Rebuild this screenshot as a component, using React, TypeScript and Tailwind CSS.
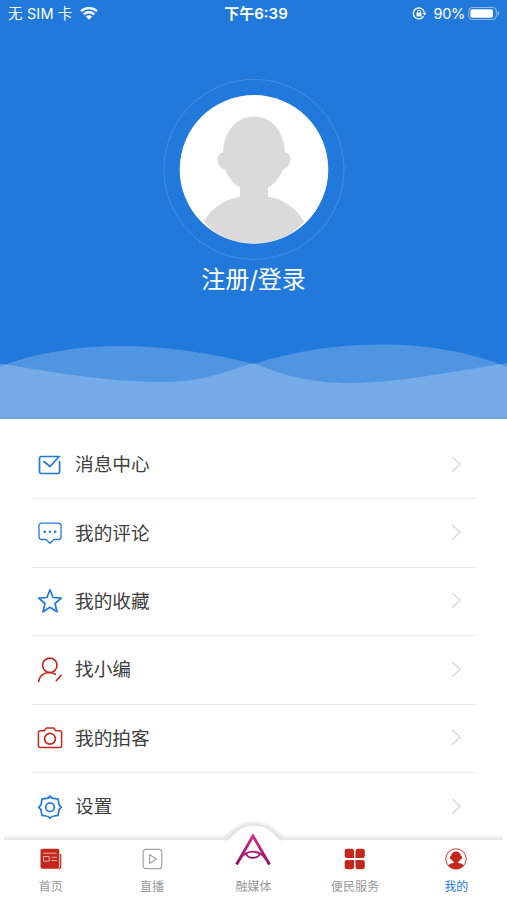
import type { ReactNode } from "react";

const BLUE = "#2179db";
const RED = "#c3281d";

function Icon({ color = BLUE, children }: { color?: string; children: ReactNode }) {
    return (
        <svg width="26" height="28" viewBox="0 0 26 28" fill="none" stroke={color} strokeWidth="1.7" strokeLinecap="round" strokeLinejoin="round">
            {children}
        </svg>
    );
}

const menu: { label: string; icon: ReactNode }[] = [
    {
        label: "消息中心",
        icon: (
            <Icon>
                <path d="M22.600 10.500V20.800a1.700 1.700 0 0 1-1.700 1.700H4.200a1.700 1.700 0 0 1-1.700-1.700V7.200a1.700 1.700 0 0 1 1.700-1.700H22.200L13 15.500 7 10.500" />
            </Icon>
        ),
    },
    {
        label: "我的评论",
        icon: (
            <Icon>
                <path strokeWidth="1.300" d="M4.300 4.200H21.700a2.300 2.300 0 0 1 2.300 2.300V18.200a2.300 2.300 0 0 1-2.300 2.300H17L13 24.200 9 20.500H4.300A2.300 2.300 0 0 1 2 18.200V6.500A2.300 2.300 0 0 1 4.300 4.200Z" />
                <path strokeWidth="2.600" d="M7.800 12.700h.01M13 12.700h.01M18.200 12.700h.01" />
            </Icon>
        ),
    },
    {
        label: "我的收藏",
        icon: (
            <Icon>
                <path strokeWidth="1.700" d="M13 2.700 16.100 10.500 24.300 11.100 18 16.500 20 24.800 13 20.300 6 24.800 8 16.500 1.700 11.100 9.900 10.500Z" />
            </Icon>
        ),
    },
    {
        label: "找小编",
        icon: (
            <Icon color={RED}>
                <circle cx="12.800" cy="9.300" r="7.200" />
                <path d="M1.600 25.300C2.700 20.300 6.500 16.700 12 16.500c2.700 0 4.500.4 6.300 1.700M19.300 24.700 24.200 19.300" />
            </Icon>
        ),
    },
    {
        label: "我的拍客",
        icon: (
            <Icon color={RED}>
                <path strokeWidth="1.500" d="M3.400 6.700H7.300L9.300 4H16.700l2 2.700h3.900a2 2 0 0 1 2 2V21.500a2 2 0 0 1-2 2H3.400a2 2 0 0 1-2-2V8.700a2 2 0 0 1 2-2Z" />
                <circle cx="13" cy="14.800" r="5.400" />
            </Icon>
        ),
    },
    {
        label: "设置",
        icon: (
            <Icon>
                <path d="M13 3C14 5 15.500 5.700 17 5.400L21.100 6.200 21.700 10.300C21.900 12 22.800 13.200 24.300 14.300 22.800 15.400 21.900 16.600 21.700 18.300L21.100 22.400 17 23C15.500 23 14 23.700 13 25.400 12 23.700 10.500 23 9 23L4.900 22.400 4.300 18.300C4.100 16.600 3.200 15.400 1.700 14.300 3.200 13.200 4.100 12 4.300 10.300L4.900 6.200 9 5.400C10.500 5.700 12 5 13 3Z" />
                <circle cx="13" cy="14.200" r="4.300" />
            </Icon>
        ),
    },
];

function StatusBar() {
    return (
        <div className="grid h-7 grid-cols-3 items-center pl-2 pr-[7px] text-[15px] leading-7">
            <div className="flex items-center gap-[7px] whitespace-nowrap">
                <span className="text-[14.500px] tracking-[0.150px]">无 SIM 卡</span>
                <svg width="18" height="14" viewBox="0 0 18 14" fill="none" stroke="white" strokeWidth="2.300">
                    <path d="M1 4.200C5.500 0 12.500 0 17 4.200M3.700 7.400c3-2.900 7.600-2.900 10.600 0" />
                    <path d="M9 12.700 5.900 9.600c1.800-1.700 4.400-1.700 6.200 0Z" fill="white" stroke="none" />
                </svg>
            </div>
            <div className="whitespace-nowrap pl-1 text-center font-semibold">下午6:39</div>
            <div className="flex items-center justify-end">
                <svg width="15" height="14" viewBox="0 0 15 14" fill="none" stroke="white" strokeWidth="1.300">
                    <path d="M11.600 9.200A5.500 5.500 0 1 1 12.300 5.500" />
                    <path d="M10.500 5.800h4l-2 2.700Z" fill="white" stroke="none" />
                    <path d="M4.500 5.700h5v3.700h-5Z" fill="white" stroke="none" />
                    <path d="M5.500 6V4.700a1.500 1.500 0 0 1 3 0v1.300" strokeWidth="1" />
                </svg>
                <span className="ml-[7px] text-[14.500px] tracking-[-0.300px]">90%</span>
                <svg className="ml-[3px]" width="32" height="14" viewBox="0 0 32 14">
                    <rect x=".8" y=".5" width="27.500" height="12" rx="3.500" fill="none" stroke="white" strokeOpacity=".5" />
                    <rect x="2.500" y="2.200" width="22.500" height="8.600" rx="1.700" fill="white" />
                    <path d="M29.700 4.300c2 .5 2 3.900 0 4.400Z" fill="white" fillOpacity=".55" />
                </svg>
            </div>
        </div>
    );
}

function Avatar() {
    return (
        <svg width="182" height="182" viewBox="0 0 182 182">
            <circle cx="91" cy="91.400" r="90" fill="none" stroke="#448fe3" />
            <circle cx="91" cy="91.400" r="74.300" fill="white" />
            <path fill="#dadada" d="M91 38.500c17 0 30 14 31 36 8 1 7 15-2 17-4 9-9 15-15 18v9c16 3 29 12 36 25-11 14.500-29 21.500-50 21.500s-39-7-50-21.500c7-13 20-22 36-25v-9c-6-3-11-9-15-18-9-2-10-16-2-17 1-22 14-36 31-36Z" />
        </svg>
    );
}

const frontWave = "M0 19.500 11 21C70 32 125 38.500 167 38 202 37.500 228 27 254 19 281 31 310 39.500 355 39 398 38.500 449 28 496 21L507 19V75H0Z";

function Waves() {
    return (
        <svg className="block" width="507" height="75" viewBox="0 0 507 75" fill="white">
            <path fillOpacity=".21" d="M0 22.500C75-6 164-3 254 20 330-5 432-8 507 23V75H0Z" />
            <path fillOpacity=".21" d={frontWave} />
            <path d="M0 73.500H507" stroke="#6199d8" strokeOpacity=".5" />
        </svg>
    );
}

const tabs: { label: string; icon: ReactNode; active?: boolean }[] = [
    {
        label: "首页",
        icon: (
            <svg width="22" height="22" viewBox="0 0 22 22" fill="none" stroke="#efb0aa">
                <rect x=".5" y=".8" width="18.800" height="20" rx="1.800" fill={RED} stroke="none" />
                <path d="M20.700 6v12.200c0 1.500-.8 2.500-2 2.500" stroke={RED} strokeWidth="1.200" />
                <path d="M3 5.200h13.500M11.500 9.300H17M11.500 12.500H17M3.500 8.500h5.700v4.700H3.500Z" />
            </svg>
        ),
    },
    {
        label: "直播",
        icon: (
            <svg width="22" height="22" viewBox="0 0 22 22" fill="none" stroke="#a3a3a3" strokeWidth="1.200">
                <rect x="2.100" y="1.300" width="18.700" height="19.300" rx="2.700" />
                <path d="M8.600 6.500 15.300 11 8.600 15.500Z" strokeLinejoin="round" />
            </svg>
        ),
    },
    {
        label: "融媒体",
        icon: (
            <svg className="relative -top-2.5" width="36" height="34" viewBox="0 0 36 34" fill="none" strokeWidth="2.800">
                <defs>
                    <linearGradient id="media" x1="0" y1="0" x2="0" y2="1">
                        <stop offset="0" stopColor="#d22b8c" />
                        <stop offset="1" stopColor="#930d62" />
                    </linearGradient>
                </defs>
                <path d="M1.500 32.500 18 4 34.500 32.500" stroke="url(#media)" />
                <path d="M5 27.500C8 22.500 12.500 19.700 18 19.700s10 2.800 13 7.800" stroke="#b01b74" strokeWidth="1.800" />
                <path d="M11.300 21.300C11.800 27.300 24.200 27.300 24.700 21.300" stroke="#a0146a" strokeWidth="1.800" />
            </svg>
        ),
    },
    {
        label: "便民服务",
        icon: (
            <svg width="22" height="22" viewBox="0 0 22 22" fill={RED}>
                <rect x=".700" y=".700" width="9.300" height="9.300" rx="2.300" />
                <rect x="11.500" y=".700" width="9.300" height="9.300" rx="2.300" />
                <rect x=".700" y="12" width="9.300" height="9.300" rx="2.300" />
                <rect x="11.500" y="12" width="9.300" height="9.300" rx="2.300" />
                <path d="M7 7h3v3H7ZM11.500 7h3v3h-3ZM7 12h3v3H7ZM11.500 12h3v3h-3Z" />
            </svg>
        ),
    },
    {
        label: "我的",
        active: true,
        icon: (
            <svg width="22" height="22" viewBox="0 0 22 22" fill={RED}>
                <circle cx="11" cy="11" r="10.200" fill="white" stroke={RED} strokeWidth=".9" />
                <path d="M11 3.500c2.700 0 4.700 1.800 5 4.500 1.900.6 1.300 3-.6 3.500-.6 1.200-1.200 2-2.200 2.600v.8c2.600.2 4.600 1.200 5.900 2.700-4 4.500-12.200 4.500-16.200 0 1.300-1.500 3.300-2.500 5.900-2.700v-.8c-1-.6-1.600-1.400-2.200-2.600-1.900-.5-2.500-2.900-.6-3.500.3-2.700 2.300-4.500 5-4.500Z" />
            </svg>
        ),
    },
];

function TabBar() {
    return (
        <nav className="relative z-10 h-[60px] shrink-0 bg-white">
            <div className="absolute inset-x-1 -top-[6px] h-[6px] bg-linear-to-b from-white to-[#e5e5e5]"></div>
            <svg className="absolute -top-[21px] left-[214px]" width="80" height="24" viewBox="0 0 80 24">
                <defs>
                    <filter id="soft" x="-10%" y="-20%" width="120%" height="140%">
                        <feGaussianBlur stdDeviation="1.500" />
                    </filter>
                </defs>
                <path d="M9 21C18 10 25 3.500 40 3.500S62 10 71 21Z" fill="#e3e3e3" filter="url(#soft)" />
                <path d="M14 22C22 13 27 7 40 7S58 13 66 22v2H14Z" fill="white" />
            </svg>
            <div className="relative grid h-full grid-cols-5">
                {tabs.map((tab) => (
                    <div key={tab.label} className="flex flex-col items-center pt-2">
                        <div className="flex h-[22px] items-center justify-center">{tab.icon}</div>
                        <span className={`mt-2 text-xs leading-[18px] ${tab.active ? "text-[#2179db]" : "text-[#999]"}`}>{tab.label}</span>
                    </div>
                ))}
            </div>
        </nav>
    );
}

export default function App() {
    return (
        <div className="flex h-[900px] w-[507px] flex-col overflow-hidden bg-white font-['Inter','Noto_Sans_CJK_SC',sans-serif]">
            <header className="flex h-[419px] shrink-0 flex-col bg-[#2179db] text-white">
                <StatusBar />
                <div className="flex flex-1 flex-col items-center pt-[50px]">
                    <Avatar />
                    <h1 className="mt-0.5 text-2xl leading-9">注册/登录</h1>
                </div>
                <Waves />
            </header>
            <main className="min-h-0 flex-1 overflow-hidden pl-8 pr-[31px] pt-3">
                {menu.map((item) => (
                    <div key={item.label} className="flex h-[68.400px] items-center border-b border-[#ebebeb] pl-[5px] pr-[14px]">
                        {item.icon}
                        <span className="ml-3 flex-1 pt-px text-[18.700px] leading-7 text-[#404040]">{item.label}</span>
                        <svg width="11" height="18" viewBox="0 0 11 18" fill="none" stroke="#d4d4d4" strokeWidth="1.200">
                            <path d="M1.200 1 9.200 8.200 1.200 15.500" />
                        </svg>
                    </div>
                ))}
            </main>
            <TabBar />
        </div>
    );
}
